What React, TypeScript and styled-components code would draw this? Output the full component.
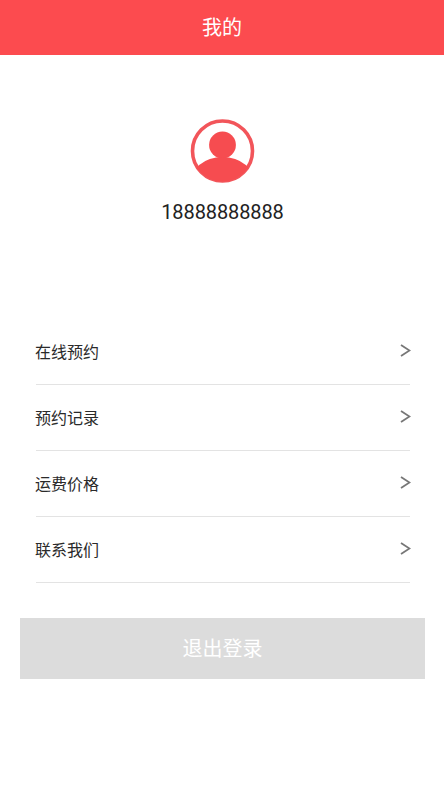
import React from "react";
import styled, { createGlobalStyle } from "styled-components";

const Global = createGlobalStyle`
  html, body { margin: 0; padding: 0; background: #fff; }
  body { font-family: "Noto Sans CJK SC", "Noto Sans", sans-serif; }
`;

const Page = styled.div`
  width: 444px;
  height: 794px;
  background: #fff;
  overflow: hidden;
`;

const Header = styled.header`
  height: 55px;
  padding-bottom: 2px;
  box-sizing: border-box;
  background: #fc4b4f;
  color: #fff;
  display: flex;
  align-items: center;
  justify-content: center;
  font-size: 20px;
`;

const Profile = styled.section`
  display: flex;
  flex-direction: column;
  align-items: center;
  padding-top: 63px;
  height: 212px;
  box-sizing: border-box;
`;

const Phone = styled.div`
  margin: 14px 0 0 1px;
  font-family: "Roboto", "Noto Sans", sans-serif;
  font-size: 20px;
  line-height: 28px;
  color: #222;
  letter-spacing: -0.1px;
`;

const Menu = styled.ul`
  list-style: none;
  margin: 52px 34px 0 36px;
  padding: 0;
`;

const Row = styled.li`
  height: 66px;
  padding-bottom: 2px;
  box-sizing: border-box;
  border-bottom: 1px solid #e3e3e3;
  display: flex;
  align-items: center;
  justify-content: space-between;
  font-size: 16px;
  color: #2a2a2a;
`;

const Label = styled.span`
  margin-left: -1px;
`;

const Chevron = styled.svg`
  width: 12px;
  height: 16px;
  margin-right: -1px;
  fill: none;
  stroke: #777;
  stroke-width: 1.8;
`;

const Logout = styled.button`
  display: block;
  margin: 35px 19px 0 20px;
  width: 405px;
  height: 61px;
  padding: 0 0 2px;
  border: 0;
  border-radius: 0;
  background: #dcdcdc;
  color: #fff;
  font-family: inherit;
  font-size: 20px;
`;

const items = ["在线预约", "预约记录", "运费价格", "联系我们"];

export default function App() {
  return (
    <Page>
      <Global />
      <Header>我的</Header>
      <Profile>
        <svg width="65" height="66" viewBox="0 0 65 66">
          <defs>
            <clipPath id="inner">
              <circle cx="32.5" cy="33" r="30.5" />
            </clipPath>
          </defs>
          <circle cx="32.5" cy="33" r="30" fill="none" stroke="#f2555a" strokeWidth="3.6" />
          <circle cx="32.5" cy="27" r="13.4" fill="#f64c50" />
          <g clipPath="url(#inner)">
            <ellipse cx="32.5" cy="66" rx="33" ry="27" fill="#f64c50" />
          </g>
        </svg>
        <Phone>18888888888</Phone>
      </Profile>
      <Menu>
        {items.map((t) => (
          <Row key={t}>
            <Label>{t}</Label>
            <Chevron viewBox="0 0 12 16">
              <path d="M2 2 L10.5 7.5 L2 13" />
            </Chevron>
          </Row>
        ))}
      </Menu>
      <Logout>退出登录</Logout>
    </Page>
  );
}
